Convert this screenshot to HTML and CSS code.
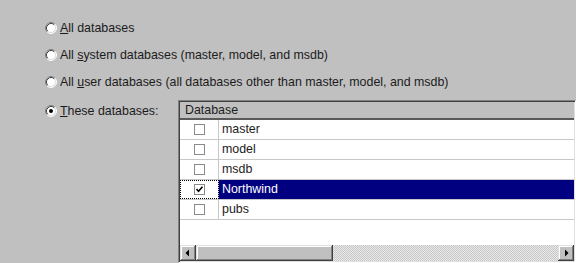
FILE: index.html
```html
<!DOCTYPE html>
<html>
<head>
<meta charset="utf-8">
<link rel="stylesheet" href="styles.css">
</head>
<body>
<div class="page">
  <div class="opt">
    <svg class="radio" width="12" height="12" viewBox="0 0 12 12"><circle cx="6" cy="6" r="5" fill="#fff"/><path d="M2.11 9.89 A5.5 5.5 0 0 1 9.89 2.11" fill="none" stroke="#808080"/><path d="M9.89 2.11 A5.5 5.5 0 0 1 2.11 9.89" fill="none" stroke="#fff"/><path d="M2.82 9.18 A4.5 4.5 0 0 1 9.18 2.82" fill="none" stroke="#404040"/><path d="M9.18 2.82 A4.5 4.5 0 0 1 2.82 9.18" fill="none" stroke="#dfdfdf"/></svg>
    <span class="lbl"><u>A</u>ll databases</span>
  </div>
  <div class="opt">
    <svg class="radio" width="12" height="12" viewBox="0 0 12 12"><circle cx="6" cy="6" r="5" fill="#fff"/><path d="M2.11 9.89 A5.5 5.5 0 0 1 9.89 2.11" fill="none" stroke="#808080"/><path d="M9.89 2.11 A5.5 5.5 0 0 1 2.11 9.89" fill="none" stroke="#fff"/><path d="M2.82 9.18 A4.5 4.5 0 0 1 9.18 2.82" fill="none" stroke="#404040"/><path d="M9.18 2.82 A4.5 4.5 0 0 1 2.82 9.18" fill="none" stroke="#dfdfdf"/></svg>
    <span class="lbl">All <u>s</u>ystem databases (master, model, and msdb)</span>
  </div>
  <div class="opt">
    <svg class="radio" width="12" height="12" viewBox="0 0 12 12"><circle cx="6" cy="6" r="5" fill="#fff"/><path d="M2.11 9.89 A5.5 5.5 0 0 1 9.89 2.11" fill="none" stroke="#808080"/><path d="M9.89 2.11 A5.5 5.5 0 0 1 2.11 9.89" fill="none" stroke="#fff"/><path d="M2.82 9.18 A4.5 4.5 0 0 1 9.18 2.82" fill="none" stroke="#404040"/><path d="M9.18 2.82 A4.5 4.5 0 0 1 2.82 9.18" fill="none" stroke="#dfdfdf"/></svg>
    <span class="lbl">All <u>u</u>ser databases (all databases other than master, model, and msdb)</span>
  </div>
  <div class="these">
    <div class="opt opt4">
      <svg class="radio" width="12" height="12" viewBox="0 0 12 12"><circle cx="6" cy="6" r="5" fill="#fff"/><path d="M2.11 9.89 A5.5 5.5 0 0 1 9.89 2.11" fill="none" stroke="#808080"/><path d="M9.89 2.11 A5.5 5.5 0 0 1 2.11 9.89" fill="none" stroke="#fff"/><path d="M2.82 9.18 A4.5 4.5 0 0 1 9.18 2.82" fill="none" stroke="#404040"/><path d="M9.18 2.82 A4.5 4.5 0 0 1 2.82 9.18" fill="none" stroke="#dfdfdf"/><circle cx="6" cy="6" r="2" fill="#000"/></svg>
      <span class="lbl"><u>T</u>hese databases:</span>
    </div>
    <div class="grid">
      <div class="hdr">Database</div>
      <div class="row"><div class="cbcell"><span class="cb"></span></div><div class="name">master</div></div>
      <div class="row"><div class="cbcell"><span class="cb"></span></div><div class="name">model</div></div>
      <div class="row"><div class="cbcell"><span class="cb"></span></div><div class="name">msdb</div></div>
      <div class="row sel"><div class="cbcell focus"><span class="cb"><svg width="9" height="9" viewBox="0 0 9 9"><path d="M1.5 4 L3.5 6.2 L7.5 1.8" fill="none" stroke="#000" stroke-width="1.6"/></svg></span></div><div class="name">Northwind</div></div>
      <div class="row"><div class="cbcell"><span class="cb"></span></div><div class="name">pubs</div></div>
      <div class="fill"></div>
      <div class="sb">
        <div class="btn"><svg width="8" height="8" viewBox="0 0 8 8"><path d="M5 0.5 L1.5 4 L5 7.5 Z" fill="#000"/></svg></div>
        <div class="thumb"></div>
        <div class="track"></div>
        <div class="btn"><svg width="8" height="8" viewBox="0 0 8 8"><path d="M3 0.5 L6.5 4 L3 7.5 Z" fill="#000"/></svg></div>
      </div>
    </div>
  </div>
</div>
</body>
</html>
```

FILE: styles.css
```css
html, body {
  margin: 0;
  padding: 0;
  background: #c0c0c0;
}
body {
  width: 576px;
  height: 263px;
  overflow: hidden;
  font-family: "Liberation Sans", Arial, sans-serif;
  font-size: 12.4px;
  color: #1c1c1c;
}
.page {
  padding: 14px 0 0 45px;
}
.opt {
  display: flex;
  align-items: center;
  height: 27px;
}
.radio {
  flex: none;
  margin-right: 3px;
}
.lbl {
  white-space: nowrap;
}
.these {
  display: flex;
  align-items: flex-start;
  margin-top: 5px;
}
.opt4 {
  width: 133px;
  flex: none;
  height: 22px;
}
.grid {
  box-sizing: border-box;
  width: 398px;
  height: 163px;
  flex: none;
  background: #fff;
  border-top: 1px solid #808080;
  border-left: 1px solid #808080;
  border-right: 1px solid #fff;
  border-bottom: 1px solid #fff;
  box-shadow: inset 1px 1px 0 #404040, inset -1px -1px 0 #dfdfdf;
  padding: 1px;
  display: flex;
  flex-direction: column;
}
.hdr {
  height: 18px;
  box-sizing: border-box;
  background: #c0c0c0;
  border-bottom: 2px solid #5a5a5a;
  padding-left: 5px;
  line-height: 16px;
  flex: none;
}
.row {
  display: flex;
  height: 20px;
  box-sizing: border-box;
  border-bottom: 1px solid #c8c8c8;
  flex: none;
}
.cbcell {
  width: 39px;
  box-sizing: border-box;
  border-right: 1px solid #c8c8c8;
  display: flex;
  align-items: center;
  justify-content: center;
  flex: none;
}
.cb {
  width: 11px;
  height: 11px;
  box-sizing: border-box;
  border: 1px solid #8a8a8a;
  background: #fff;
  display: flex;
  align-items: center;
  justify-content: center;
}
.focus {
  outline: 1px dotted #000;
  outline-offset: -1px;
}
.name {
  flex: 1;
  padding-left: 3px;
  line-height: 19px;
}
.sel .name {
  background: #000080;
  color: #fff;
}
.fill {
  flex: 1;
}
.sb {
  height: 16px;
  display: flex;
  flex: none;
}
.btn, .thumb {
  background: #c0c0c0;
  box-shadow: inset -1px -1px 0 #404040, inset 1px 1px 0 #dfdfdf, inset -2px -2px 0 #808080, inset 2px 2px 0 #fff;
}
.btn {
  width: 16px;
  display: flex;
  align-items: center;
  justify-content: center;
  flex: none;
}
.thumb {
  width: 137px;
  flex: none;
}
.track {
  flex: 1;
  background-color: #c0c0c0;
  background-image: repeating-conic-gradient(#e8e8e8 0 25%, #c8c8c8 0 50%);
  background-size: 2px 2px;
}
```
